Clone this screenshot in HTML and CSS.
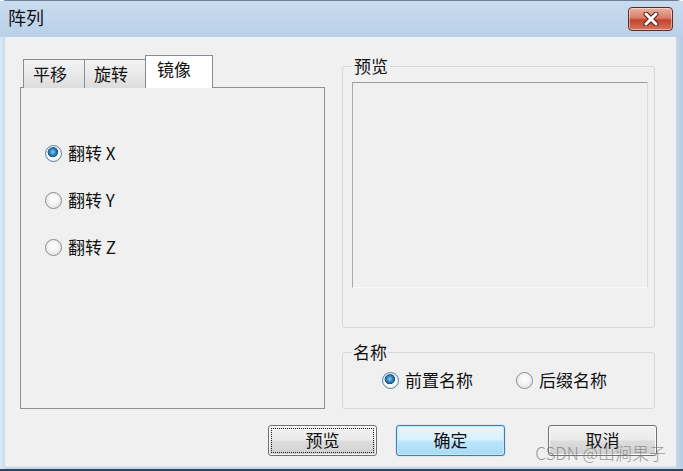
FILE: index.html
```html
<!DOCTYPE html>
<html lang="zh-CN">
<head>
    <meta charset="UTF-8">
    <title>阵列</title>
    <link rel="stylesheet" href="styles.css">
</head>
<body>
    <div class="window">
        <div class="titlebar">
            <span class="title">阵列</span>
            <button class="close-btn" title="关闭">
                <svg width="18" height="14" viewBox="0 0 18 14">
                    <path d="M4 2 L14 12 M14 2 L4 12" stroke="#5a1d14" stroke-width="5" stroke-linecap="round"/>
                    <path d="M4 2 L14 12 M14 2 L4 12" stroke="#ffffff" stroke-width="3" stroke-linecap="round"/>
                </svg>
            </button>
        </div>

        <div class="client">
            <div class="main">
                <div class="tabs">
                    <div class="tab-strip">
                        <div class="tab first">平移</div>
                        <div class="tab">旋转</div>
                        <div class="tab active">镜像</div>
                    </div>
                    <div class="tab-panel">
                        <label class="radio-row"><input type="radio" name="axis" checked><span>翻转 X</span></label>
                        <label class="radio-row"><input type="radio" name="axis"><span>翻转 Y</span></label>
                        <label class="radio-row"><input type="radio" name="axis"><span>翻转 Z</span></label>
                    </div>
                </div>

                <div class="side">
                    <fieldset class="group preview-group">
                        <legend>预览</legend>
                        <div class="preview-box"></div>
                    </fieldset>
                    <fieldset class="group name-group">
                        <legend>名称</legend>
                        <div class="name-options">
                            <label class="radio-row"><input type="radio" name="naming" checked><span>前置名称</span></label>
                            <label class="radio-row"><input type="radio" name="naming"><span>后缀名称</span></label>
                        </div>
                    </fieldset>
                </div>
            </div>

            <div class="buttons">
                <button class="btn focused"><span>预览</span></button>
                <button class="btn default"><span>确定</span></button>
                <button class="btn cancel"><span>取消</span></button>
            </div>

            <div class="watermark">CSDN @山涧果子</div>
        </div>
    </div>
</body>
</html>
```

FILE: styles.css
```css
:root {
    --frame: #c2d7ec;
    --client: #f0f0f0;
    --panel-border: #8e8f8f;
    --tab-border: #898c95;
    --text: #111111;
}

* {
    box-sizing: border-box;
}

body {
    margin: 0;
    background: #ffffff;
    font-family: "Noto Sans CJK SC", "DejaVu Sans", sans-serif;
    color: var(--text);
}

.window {
    width: 683px;
    height: 471px;
    padding: 0 7px 0 5px;
    background: linear-gradient(to right, #dfe9f3 0, #c4d8ec 6px, #c4d8ec 676px, #b3cbe3 100%);
    border-top: 1px solid #6d8196;
    border-radius: 6px 6px 0 0;
    border-bottom: 2px solid #2e4357;
    position: relative;
}

.titlebar {
    height: 36px;
    display: flex;
    align-items: center;
    justify-content: space-between;
    margin: 0 -7px 0 -5px;
    padding: 0 10px 4px 8px;
    background: linear-gradient(#c9dcef, #b9d0e8);
}

.title {
    font-size: 18px;
    line-height: 22px;
    color: #111;
}

.close-btn {
    width: 45px;
    height: 24px;
    margin-top: 4px;
    padding: 0;
    border: 1px solid #5e2a22;
    border-radius: 4px;
    background: linear-gradient(#eab1a2 0, #d97c68 45%, #c2442c 55%, #d6765f 100%);
    box-shadow: inset 0 0 0 1px rgba(255, 255, 255, 0.45);
    display: flex;
    align-items: center;
    justify-content: center;
}

.client {
    position: relative;
    height: 430px;
    background: var(--client);
    padding: 19px 19px 0 15px;
    border-bottom: 1px solid #dde6ee;
}

.main {
    display: flex;
    gap: 17px;
    align-items: flex-start;
}

/* tab control */
.tabs {
    width: 305px;
}

.tab-strip {
    display: flex;
    align-items: flex-end;
    padding-left: 3px;
    height: 32px;
    margin-bottom: -1px;
}

.tab {
    height: 29px;
    width: 62px;
    margin-left: -1px;
    padding-left: 9px;
    font-size: 17px;
    line-height: 27px;
    border: 1px solid var(--tab-border);
    border-bottom: none;
    background: linear-gradient(#f3f3f3, #e9e9e9 50%, #dcdcdc);
}

.tab.first {
    margin-left: 0;
}

.tab.active {
    position: relative;
    z-index: 1;
    height: 33px;
    width: 68px;
    padding-left: 11px;
    line-height: 26px;
    background: #ffffff;
}

.tab-panel {
    height: 322px;
    border: 1px solid var(--panel-border);
    background: var(--client);
    padding: 55px 0 0 24px;
    display: flex;
    flex-direction: column;
    gap: 27px;
}

/* radios */
.radio-row {
    display: flex;
    align-items: center;
    gap: 6px;
    height: 20px;
    font-size: 17px;
    line-height: 20px;
}

.radio-row input {
    appearance: none;
    -webkit-appearance: none;
    margin: 0;
    width: 17px;
    height: 17px;
    border-radius: 50%;
    border: 1px solid #8a8a8a;
    background: radial-gradient(circle at 50% 40%, #ffffff 0, #f4f4f4 45%, #d2d2d2 100%);
    box-shadow: inset 0 0 0 1px #eeeeee;
}

.radio-row input:checked {
    border-color: #5a7ea0;
    background:
        radial-gradient(circle at 45% 40%, #8fd0f2 0, #2d82bd 3px, #1b5787 5px, transparent 5.5px),
        radial-gradient(circle, #d7e6f1 0, #ffffff 60%, #c6d2dc 100%);
}

/* group boxes */
.side {
    width: 313px;
}

.group {
    margin: 0;
    border: 1px solid #d5d9dd;
    border-radius: 3px;
}

.group legend {
    padding: 0 2px;
    font-size: 17px;
    line-height: 20px;
}

.preview-group {
    height: 272px;
    padding: 6px 6px 0 9px;
}

.preview-box {
    width: 296px;
    height: 206px;
    border: 1px solid;
    border-color: #9c9c9c #dcdcdc #f8f8f8 #a8a8a8;
    background: var(--client);
}

.name-group {
    margin-top: 14px;
    height: 67px;
    padding: 8px 6px 0 9px;
}

.name-group legend {
    padding: 0 1px;
}

.name-options {
    display: flex;
    gap: 43px;
    margin-left: 30px;
}

/* buttons */
.buttons {
    display: flex;
    justify-content: flex-end;
    gap: 19px;
    margin-top: 16px;
}

.btn {
    width: 109px;
    height: 31px;
    padding: 2px;
    border: 1px solid #707070;
    border-radius: 3px;
    background: linear-gradient(#f2f2f2, #ebebeb 48%, #dddddd 52%, #cfcfcf);
    box-shadow: inset 0 0 0 1px #fbfbfb;
    font-family: inherit;
    font-size: 17px;
    color: #111;
}

.btn span {
    display: block;
    height: 100%;
    line-height: 23px;
}

.btn.focused span {
    outline: 1px dotted #222;
    outline-offset: -1px;
}

.btn.default {
    border-color: #3c7fb1;
    background: linear-gradient(#eaf6fd, #d9f0fc 48%, #bee6fd 52%, #a7d9f5);
    box-shadow: inset 0 0 0 1px #c8e8fa, 0 0 1px #48a0dc;
}

.btn.cancel {
    margin-left: 24px;
}

.watermark {
    position: absolute;
    right: 10px;
    bottom: 3px;
    font-size: 17px;
    line-height: 20px;
    font-weight: 300;
    color: rgba(120, 120, 120, 0.75);
    pointer-events: none;
}
```
